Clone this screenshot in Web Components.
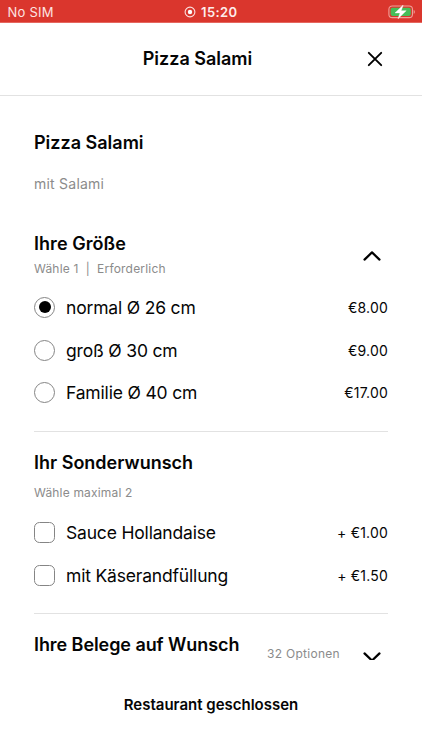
<!DOCTYPE html>
<html lang="de">
<head>
<meta charset="utf-8">
<title>Pizza Salami</title>
<style>
html,body{margin:0;height:100%;background:#fff}
body{font-family:Inter,"Liberation Sans",sans-serif;color:#050505;overflow:hidden}
</style>
</head>
<body>
<order-screen></order-screen>
<script>
const define = (name, html) => customElements.define(name, class extends HTMLElement {
  constructor() {
    super();
    const t = document.createElement('template');
    t.innerHTML = html;
    this.attachShadow({mode: 'open'}).append(t.content.cloneNode(true));
  }
});

define('status-bar', `<style>
:host{display:grid;grid-template-columns:1fr auto 1fr;align-items:center;height:23px;box-sizing:border-box;padding:1px 7px 0 7.5px;background:#da362d;color:#fff;font-size:13px;line-height:22px;flex:none;border-bottom:1px solid #e5675f}
.sim{letter-spacing:.22px;color:#fde3e1}
.time{display:flex;align-items:center;gap:5px;font-weight:600;letter-spacing:.4px;color:#fdeceb;margin-left:-1px}
.bat{justify-self:end}
svg{display:block}
</style>
<span class="sim">No SIM</span>
<span class="time"><svg width="12" height="12" viewBox="0 0 12 12"><circle cx="6" cy="6" r="4.9" fill="none" stroke="#fbe0de" stroke-width="1.1"/><circle cx="6" cy="6" r="2.2" fill="#fff"/></svg><span>15:20</span></span>
<svg class="bat" width="27" height="14" viewBox="0 0 27 14"><rect x=".9" y="1" width="23.6" height="11.6" rx="3.4" fill="none" stroke="#ef9f98" stroke-width="1.1"/><rect x="2.6" y="2.7" width="20.2" height="8.2" rx="1.8" fill="#46bd58"/><path d="M25.7 5v3.8c.8-.3 1.1-1.1 1.1-1.9s-.3-1.6-1.1-1.9z" fill="#ef9f98"/><path d="M15.2.1 7 7.9h5L10 13.8 18.2 5.7h-5z" fill="#fff" stroke="#fff" stroke-width=".4" stroke-linejoin="round"/></svg>`);

define('top-bar', `<style>
:host{display:grid;grid-template-columns:60px 1fr 87px;align-items:center;height:73px;box-sizing:border-box;border-bottom:1px solid #e2e2e2;flex:none}
h1{grid-column:2;margin:0;text-align:center;font-size:18px;line-height:24px;font-weight:600}
svg{display:block;margin-left:32px}
</style>
<h1><slot></slot></h1>
<svg width="16" height="16" viewBox="0 0 16 16" fill="none" stroke="#000" stroke-width="1.9" stroke-linecap="round"><path d="M1.8 1.8l12.4 12.4M14.2 1.8 1.8 14.2"/></svg>`);

define('chevron-icon', `<style>
:host{display:block;width:18px;height:10px}
:host([down]) svg{transform:rotate(180deg)}
svg{display:block}
</style>
<svg width="18" height="10" viewBox="0 0 18 10" fill="none" stroke="#000" stroke-width="2.2" stroke-linecap="round" stroke-linejoin="round"><path d="M1.5 8.6 9 1.4l7.5 7.2"/></svg>`);

define('option-group', `<style>
:host{display:block;box-sizing:border-box}
:host([divided]){border-top:1px solid #e2e2e2}
header{display:flex;align-items:flex-start;justify-content:space-between;padding:var(--top,19px) 0 var(--bottom,8px)}
h2{margin:0;font-size:18px;line-height:24px;font-weight:600;letter-spacing:var(--title-ls,0px);white-space:nowrap}
.sub{font-size:12px;line-height:20px;color:#8b8b8b;margin-top:var(--gap,8px);letter-spacing:var(--sub-ls,.18px);white-space:pre}
.side{display:flex;align-items:center;gap:23px;height:20px;margin-top:var(--side,12px);padding-right:7px;font-size:12px;line-height:12px;letter-spacing:.28px;color:#8b8b8b}
</style>
<header><div><h2><slot name="title"></slot></h2><div class="sub"><slot name="sub"></slot></div></div><div class="side"><slot name="side"></slot></div></header>
<slot></slot>`);

define('option-row', `<style>
:host{display:flex;align-items:center;height:42.75px;font-size:17.5px;line-height:24px;letter-spacing:-.18px}
i{box-sizing:border-box;width:21px;height:21px;border:1.2px solid #858585;border-radius:5.5px;margin-right:11px;display:grid;place-items:center;flex:none}
:host([radio]) i{border-radius:50%}
:host([checked]) i::after{content:"";width:12px;height:12px;border-radius:50%;background:#000}
span{padding-top:.8px}
.price{margin-left:auto;font-size:14px;letter-spacing:.2px}
</style>
<i></i><span><slot></slot></span><span class="price"><slot name="price"></slot></span>`);

define('order-footer', `<style>
:host{display:block;flex:none;height:90px;box-sizing:border-box;padding-top:33px;text-align:center;font-size:15px;line-height:24px;font-weight:600;background:#fff}
</style><slot></slot>`);

define('order-screen', `<style>
:host{display:flex;flex-direction:column;width:422px;height:750px}
main{flex:1;min-height:0;overflow:hidden;padding:35px 34px 0}
h2{margin:0;font-size:18px;line-height:24px;font-weight:600}
p{margin:17px 0 36px;font-size:14px;line-height:24px;letter-spacing:.23px;color:#8b8b8b}
.size{--top:0px;--gap:3px;--side:14px;--bottom:7px;--title-ls:.05px;--sub-ls:.2px}
option-group{padding-bottom:16.75px}
.wish{--bottom:8px;padding-bottom:16.25px}
.toppings{--side:11px;--title-ls:-.07px}
.toppings chevron-icon{margin-top:6px}
</style>
<status-bar></status-bar>
<top-bar>Pizza Salami</top-bar>
<main>
<h2>Pizza Salami</h2>
<p>mit Salami</p>
<option-group class="size"><span slot="title">Ihre Größe</span><span slot="sub">Wähle 1&nbsp; |&nbsp; Erforderlich</span><chevron-icon slot="side"></chevron-icon>
<option-row radio checked>normal Ø 26 cm<span slot="price">€8.00</span></option-row>
<option-row radio>groß Ø 30 cm<span slot="price">€9.00</span></option-row>
<option-row radio>Familie Ø 40 cm<span slot="price">€17.00</span></option-row>
</option-group>
<option-group class="wish" divided><span slot="title">Ihr Sonderwunsch</span><span slot="sub">Wähle maximal 2</span>
<option-row>Sauce Hollandaise<span slot="price">+ €1.00</span></option-row>
<option-row>mit Käserandfüllung<span slot="price">+ €1.50</span></option-row>
</option-group>
<option-group class="toppings" divided><span slot="title">Ihre Belege auf Wunsch</span><span slot="side">32 Optionen</span><chevron-icon slot="side" down></chevron-icon></option-group>
</main>
<order-footer>Restaurant geschlossen</order-footer>`);
</script>
</body>
</html>
